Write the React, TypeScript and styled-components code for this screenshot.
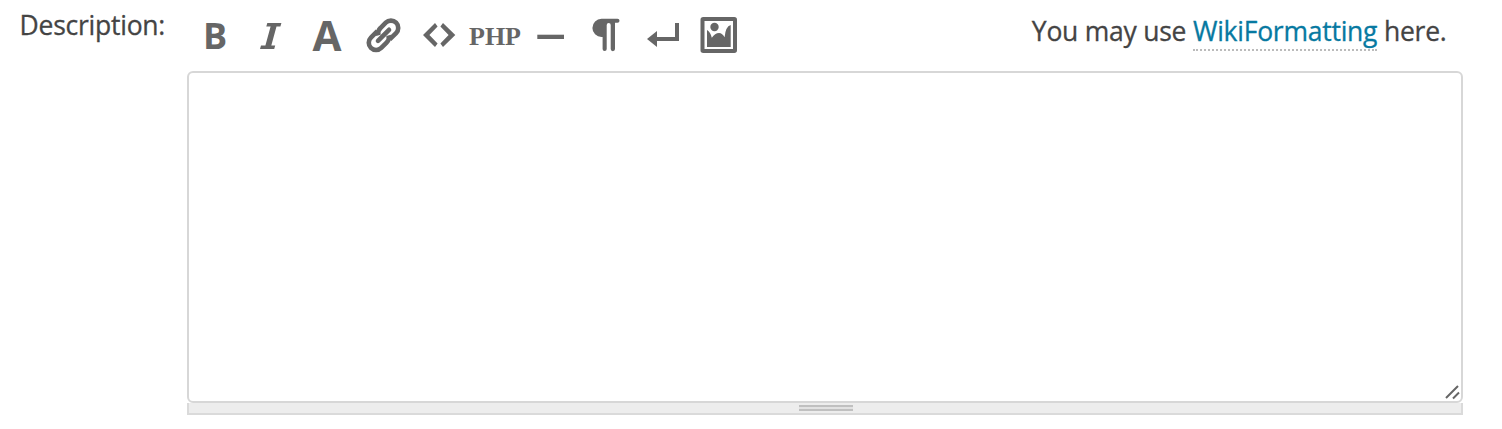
import React from "react";
import styled, { createGlobalStyle } from "styled-components";

const GlobalStyle = createGlobalStyle`
  * { box-sizing: border-box; }
  body {
    margin: 0;
    background: #fff;
    color: #444;
    font: 26.5px/36px "Open Sans", "Noto Sans", sans-serif;
    letter-spacing: -0.24px;
  }
`;

const Field = styled.div`
  display: grid;
  grid-template-columns: 187px 1276px;
  height: 429px;
`;

const Label = styled.label`
  padding: 7px 0 0 19.5px;
  -webkit-text-stroke: 0.3px currentColor;
`;

const Editor = styled.div`
  display: flex;
  flex-direction: column;
`;

const Header = styled.div`
  display: flex;
  justify-content: space-between;
  height: 71px;
`;

const Toolbar = styled.div`
  display: flex;
`;

const Tool = styled.button`
  display: flex;
  width: 56px;
  height: 71px;
  padding: 0;
  border: 0;
  background: none;
  color: #666;
`;

const Letter = styled.span<{ $size: number; $family?: string; $top: number }>`
  width: 56px;
  padding-top: ${(p) => p.$top}px;
  text-align: center;
  white-space: nowrap;
  font-family: ${(p) => p.$family ?? '"Open Sans", sans-serif'};
  font-size: ${(p) => p.$size}px;
  font-weight: 700;
  line-height: 44px;
`;

const Icon = styled.svg.attrs({ viewBox: "0 0 56 71", width: 56, height: 71 })`
  display: block;
  fill: currentColor;
`;

const Hint = styled.div`
  padding: 13px 16.5px 0 0;
  white-space: nowrap;
  -webkit-text-stroke: 0.3px currentColor;
`;

const HintLink = styled.a`
  color: #0779a1;
  text-decoration: none;
  border-bottom: 2px dotted #bbb;
`;

const TextArea = styled.textarea`
  display: block;
  width: 100%;
  height: 332px;
  padding: 6px;
  border: 2px solid #d7d7d7;
  border-radius: 6px;
  background: #fff;
  resize: none;
  outline: none;
`;

const TextBox = styled.div`
  position: relative;
`;

const Resizer = styled.svg`
  position: absolute;
  right: 2px;
  bottom: 2px;
`;

const Grip = styled.div`
  display: flex;
  justify-content: center;
  height: 12px;
  padding: 2px 0 0 2px;
  border: solid #dadada;
  border-width: 0 2px 2px;
  background: #ededed;
`;

const GripHandle = styled.span`
  width: 54px;
  height: 6px;
  border: solid #c0c0c0;
  border-width: 2px 0;
  background: #e2e2e2;
`;

export default function App() {
  return (
    <>
      <GlobalStyle />
      <Field>
        <Label htmlFor="description">Description:</Label>
        <Editor>
          <Header>
            <Toolbar>
              <Tool title="Bold">
                <Letter $size={36} $top={14}>B</Letter>
              </Tool>
              <Tool title="Italic">
                <Icon>
                  <path d="M24.3 23H38.4L37.4 26.6H33.5L28.3 45.4H32.2L31.2 49H17L18 45.4H22.4L27.6 26.6H23.3Z" />
                </Icon>
              </Tool>
              <Tool title="Heading">
                <Letter $size={42} $top={13}>A</Letter>
              </Tool>
              <Tool title="Link">
                <Icon>
                  <g transform="translate(28.5 35.3) rotate(-45)" fill="none" stroke="currentColor" strokeWidth="4.6">
                    <path d="M-1.4 -7.3H-10.5A7.3 7.3 0 0 0 -10.5 7.3H-3A7.3 7.3 0 0 0 3.6 3.6" />
                    <path d="M1.4 7.3H10.5A7.3 7.3 0 0 0 10.5 -7.3H3A7.3 7.3 0 0 0 -3.6 -3.6" />
                    <path d="M-7.8 0H7.8" strokeLinecap="round" />
                  </g>
                </Icon>
              </Tool>
              <Tool title="Code">
                <Icon>
                  <path d="M24 23L26.6 26.6L18.4 35L26.6 43.4L24 47L12 35ZM32 23L29.4 26.6L37.6 35L29.4 43.4L32 47L44.3 35Z" />
                </Icon>
              </Tool>
              <Tool title="PHP code">
                <Letter $size={26} $top={15} $family={'"Liberation Serif", serif'}>PHP</Letter>
              </Tool>
              <Tool title="Horizontal rule">
                <Icon>
                  <path d="M14.3 34.7H41V39H14.3Z" />
                </Icon>
              </Tool>
              <Tool title="Paragraph">
                <Icon>
                  <path d="M22.5 18.8H38.5A2 2 0 0 1 38.5 22.8H36V49A2 2 0 0 1 31.7 49V25A2 2 0 0 0 27.7 25V49A2 2 0 0 1 23.6 49V37H22.5A9.1 9.1 0 0 1 22.5 18.8Z" />
                </Icon>
              </Tool>
              <Tool title="Line break">
                <Icon>
                  <path d="M40 23H44V41H22V47L12 39L22 31V37H40Z" />
                </Icon>
              </Tool>
              <Tool title="Image">
                <Icon>
                  <path
                    fillRule="evenodd"
                    d="M12.2 17H43.3Q46 17 46 19.7V50.3Q46 53 43.3 53H12.2Q9.5 53 9.5 50.3V19.7Q9.5 17 12.2 17ZM13.5 21V49H42V21Z"
                  />
                  <circle cx="23.5" cy="27" r="4.2" />
                  <path d="M16 47V30Q19.5 32 20.8 37.8Q24 33 28 33Q31.5 33.2 33.6 37.2Q34.5 26.5 39.7 25V47Z" />
                </Icon>
              </Tool>
            </Toolbar>
            <Hint>
              You may use <HintLink>WikiFormatting</HintLink> here.
            </Hint>
          </Header>
          <TextBox>
            <TextArea id="description" />
            <Resizer width="17" height="17" viewBox="0 0 17 17" fill="none" stroke="#666" strokeWidth="2">
              <path d="M2 14L14 2M9 14.5L15 8.5" />
            </Resizer>
          </TextBox>
          <Grip>
            <GripHandle />
          </Grip>
        </Editor>
      </Field>
    </>
  );
}
